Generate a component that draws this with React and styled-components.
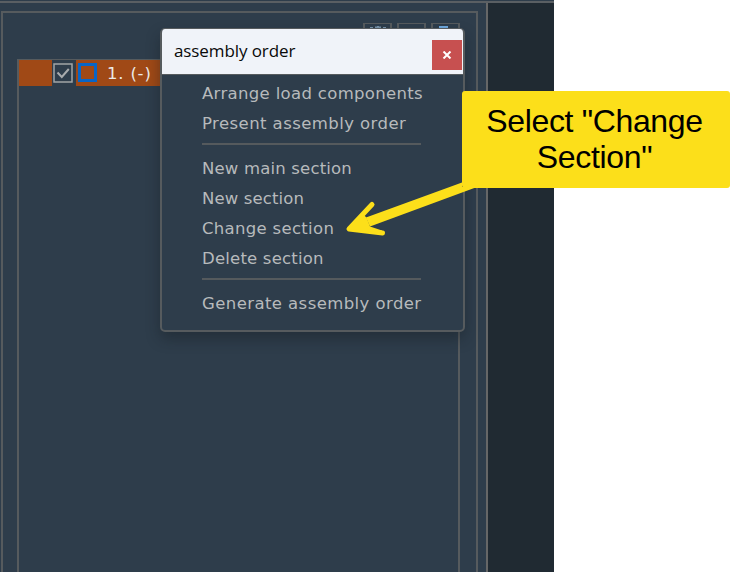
import React from "react";
import styled, { createGlobalStyle } from "styled-components";

const line = "#565b5e";

const GlobalStyle = createGlobalStyle`
  * { box-sizing: border-box; }
  body { margin: 0; background: #fff; overflow: hidden; }
`;

const Page = styled.div`
  position: relative;
  width: 732px;
  height: 572px;
  overflow: hidden;
`;

const AppWindow = styled.div`
  display: flex;
  flex-direction: column;
  width: 554px;
  height: 572px;
  background: #2e3d4b;
`;

const TopEdge = styled.div`
  height: 3px;
  flex: none;
  border-bottom: 2px solid #5a5f63;
`;

const Columns = styled.div`
  display: flex;
  flex: 1;
`;

const SidePanel = styled.div`
  width: 488px;
  padding: 8px 8px 0 1px;
  border-right: 2px solid #666767;
`;

const Canvas = styled.div`
  flex: 1;
  background: #202a32;
`;

const Frame = styled.div`
  height: 100%;
  padding: 10px 16px 0 14px;
  border: 2px solid ${line};
  border-bottom: 0;
`;

const Toolbar = styled.div`
  display: flex;
  justify-content: flex-end;
  gap: 5px;
  height: 36px;
`;

const ToolButton = styled.div`
  width: 29px;
  height: 29px;
  padding-top: 2px;
  border: 2px solid ${line};
  border-top-width: 1px;
  display: flex;
  justify-content: center;
`;

const List = styled.div`
  height: calc(100% - 36px);
  border: 2px solid ${line};
  border-top-width: 1px;
  border-bottom: 0;
`;

const Row = styled.div`
  display: flex;
  align-items: center;
  height: 26px;
  background: #a04916;
  color: #ecebe9;
  font: 16.5px/25px "DejaVu Sans", sans-serif;
`;

const CheckCell = styled.div`
  display: flex;
  justify-content: center;
  align-items: center;
  width: 24px;
  height: 26px;
  margin-left: 33px;
  padding-right: 2px;
  background: #2e3d4b;
`;

const ColorBox = styled.div`
  flex: none;
  width: 19px;
  height: 19px;
  margin: -2px 10px 0 2px;
  border: 3px solid #0965c6;
`;

const RowLabel = styled.span`
  letter-spacing: 0.8px;
  padding-top: 1px;
`;

const Popup = styled.div`
  position: absolute;
  left: 160px;
  top: 28px;
  width: 305px;
  height: 304px;
  border: 2px solid ${line};
  border-top-width: 1px;
  border-radius: 5px;
  background: #2e3d4b;
  box-shadow: 0 7px 14px rgba(20, 28, 32, 0.4);
  overflow: hidden;
`;

const Header = styled.div`
  display: flex;
  justify-content: space-between;
  height: 46px;
  margin-left: -1px;
  padding: 11px 1px 0 13px;
  border-bottom: 1px solid ${line};
  background: #f0f3f9;
`;

const Title = styled.div`
  margin-top: -1px;
  font: 17px/23px "Open Sans", sans-serif;
  letter-spacing: -0.1px;
  color: #090909;
`;

const Close = styled.div`
  display: flex;
  align-items: center;
  justify-content: center;
  width: 30px;
  height: 30px;
  background: #c75050;
`;

const Menu = styled.div`
  display: flex;
  flex-direction: column;
  padding: 4px 0 0 40px;
`;

const Item = styled.div`
  height: 30px;
  font: 16.5px/30px "DejaVu Sans", sans-serif;
  letter-spacing: ${(p) => p.$spacing || 0}px;
  white-space: nowrap;
  color: #b7babc;
`;

const Divider = styled.div`
  width: 219px;
  height: 2px;
  margin: 4px 0 9px;
  background: #555a5d;
`;

const Arrow = styled.svg`
  position: absolute;
  left: 340px;
  top: 175px;
`;

const Callout = styled.div`
  position: absolute;
  left: 462px;
  top: 91px;
  width: 268px;
  height: 97px;
  padding: 12px 3px 0 0;
  border-radius: 3px;
  background: #fcdf1a;
  color: #000;
  font: 32px/36px "Liberation Sans", Arial, sans-serif;
  letter-spacing: -0.35px;
  text-align: center;
`;

const groups = [
  [["Arrange load components", 0.33], ["Present assembly order", 0.43]],
  [["New main section", 0.18], ["New section", 0.13], ["Change section", 0.31], ["Delete section", 0.2]],
  [["Generate assembly order", 0.42]],
];

export default function App() {
  return (
    <Page>
      <GlobalStyle />
      <AppWindow>
        <TopEdge />
        <Columns>
          <SidePanel>
            <Frame>
              <Toolbar>
                <ToolButton>
                  <svg width="18" height="16" viewBox="0 0 18 16">
                    <path d="M1 2h3M6 1.500h6M14 2h3M9 0v6" stroke="#7894ac" strokeWidth="2" />
                  </svg>
                </ToolButton>
                <ToolButton />
                <ToolButton>
                  <svg width="14" height="16" viewBox="0 0 14 16">
                    <path d="M0 0h9v6H0z" fill="#6fa9df" />
                  </svg>
                </ToolButton>
              </Toolbar>
              <List>
                <Row>
                  <CheckCell>
                    <svg width="20" height="20" viewBox="0 0 20 20" fill="none">
                      <path d="M1 1h18v18H1z" stroke="#a1a5a6" strokeWidth="1.5" />
                      <path d="M4.5 9.5l4.3 4.5 7-8" stroke="#a8abad" strokeWidth="2" />
                    </svg>
                  </CheckCell>
                  <ColorBox />
                  <RowLabel>1. (-)</RowLabel>
                </Row>
              </List>
            </Frame>
          </SidePanel>
          <Canvas />
        </Columns>
      </AppWindow>
      <Popup>
        <Header>
          <Title>assembly order</Title>
          <Close>
            <svg width="10" height="8" viewBox="0 0 10 8" fill="none">
              <path d="M1.5 .5l7 7M8.5 .5l-7 7" stroke="#fff" strokeWidth="2" />
            </svg>
          </Close>
        </Header>
        <Menu>
          {groups.map((group, i) => (
            <React.Fragment key={i}>
              {i > 0 && <Divider />}
              {group.map(([label, spacing]) => (
                <Item key={label} $spacing={spacing}>{label}</Item>
              ))}
            </React.Fragment>
          ))}
        </Menu>
      </Popup>
      <Arrow width="150" height="70" viewBox="340 175 150 70">
        <path d="M462 182.500V187H477L370 226.500L366 217.500Z" fill="#fcdf1a" />
        <path d="M372 204.500L349 229L382.500 233" fill="none" stroke="#fcdf1a" strokeWidth="5" strokeLinecap="round" strokeLinejoin="round" />
        <path d="M349 229L362 213.500L366.500 217.500L370 226.500L382 230.500V233Z" fill="#fcdf1a" />
      </Arrow>
      <Callout>Select "Change<br />Section"</Callout>
    </Page>
  );
}
